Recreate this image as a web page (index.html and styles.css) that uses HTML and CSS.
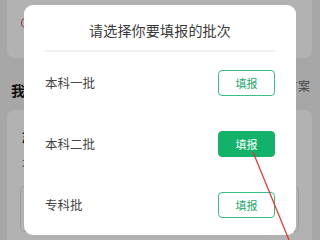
FILE: index.html
```html
<!DOCTYPE html>
<html lang="zh">
<head>
<meta charset="utf-8">
<link rel="stylesheet" href="styles.css">
</head>
<body>
<div class="page">
  <div class="card top-card">
    <span class="red-icon"></span>
  </div>
  <div class="section-head">
    <span class="section-title">我的</span>
    <span class="section-link">方案</span>
  </div>
  <div class="card list-card">
    <div class="list-title">志愿</div>
    <div class="list-sub">本科</div>
    <div class="inner-box"></div>
  </div>
</div>

<div class="mask">
  <div class="dialog">
    <div class="dialog-title">请选择你要填报的批次</div>
    <div class="divider"></div>
    <div class="row">
      <span class="row-label">本科一批</span>
      <button class="btn">填报</button>
    </div>
    <div class="row">
      <span class="row-label">本科二批</span>
      <button class="btn btn-primary">填报</button>
    </div>
    <div class="row">
      <span class="row-label">专科批</span>
      <button class="btn">填报</button>
    </div>
  </div>
</div>

<svg class="annotation" width="320" height="240" viewBox="0 0 320 240">
  <line x1="253" y1="152" x2="289" y2="240" stroke="#e8302a" stroke-width="1.2"/>
</svg>
</body>
</html>
```
FILE: styles.css
```css
html, body {
  margin: 0;
  padding: 0;
  width: 320px;
  height: 240px;
  overflow: hidden;
  background: #f0f0f0;
  font-family: "Noto Sans CJK SC", "Noto Sans", sans-serif;
}

.page {
  padding: 0 8px 0 7px;
  display: flex;
  flex-direction: column;
}

.card {
  background: #ffffff;
  border-radius: 8px;
}

.top-card {
  height: 58px;
  border-radius: 0 0 8px 8px;
  display: flex;
  padding: 17px 0 0 14px;
  box-sizing: border-box;
}

.red-icon {
  width: 12px;
  height: 12px;
  border: 1.5px solid #e04040;
  border-radius: 50%;
  box-sizing: border-box;
}

.section-head {
  display: flex;
  justify-content: space-between;
  align-items: flex-start;
  padding: 20px 2px 0 4px;
  height: 32px;
  box-sizing: border-box;
}

.section-title {
  font-size: 14px;
  font-weight: 700;
  color: #1a1a1a;
  line-height: 20px;
  margin-top: 2px;
}

.section-link {
  font-size: 12px;
  color: #666;
  line-height: 16px;
}

.list-card {
  margin-top: 20px;
  height: 140px;
  padding: 18px 13px 0 15px;
  box-sizing: border-box;
}

.list-title {
  font-size: 13px;
  font-weight: 700;
  color: #222;
  line-height: 18px;
}

.list-sub {
  font-size: 11px;
  color: #666;
  line-height: 14px;
  margin-top: 10px;
}

.inner-box {
  margin-top: 16px;
  margin-left: -2px;
  height: 44px;
  border: 1px solid #e6e6e6;
  border-radius: 4px;
}

.mask {
  position: fixed;
  inset: 0;
  background: rgba(0, 0, 0, 0.3);
  display: flex;
  align-items: center;
  justify-content: center;
}

.dialog {
  width: 272px;
  height: 230px;
  background: #ffffff;
  border-radius: 9px;
  display: flex;
  flex-direction: column;
  padding: 0 21px;
  box-sizing: border-box;
}

.dialog-title {
  height: 45px;
  display: flex;
  align-items: center;
  justify-content: center;
  padding-top: 4px;
  box-sizing: border-box;
  font-size: 14px;
  color: #3a3a3a;
  letter-spacing: 0.2px;
}

.divider {
  height: 2px;
  background: #f0f0f0;
}

.row {
  height: 61px;
  display: flex;
  align-items: center;
  justify-content: space-between;
}

.row-label {
  font-size: 12.5px;
  color: #444;
}

.btn {
  width: 57px;
  height: 26px;
  border: 1px solid #3bbd86;
  border-radius: 4px;
  background: #ffffff;
  color: #21a96c;
  font-family: "Noto Sans CJK SC", "Noto Sans", sans-serif;
  font-size: 11px;
  padding: 0;
  display: flex;
  align-items: center;
  justify-content: center;
}

.btn-primary {
  background: #12b26b;
  border-color: #12b26b;
  color: #ffffff;
}

.annotation {
  position: fixed;
  left: 0;
  top: 0;
  pointer-events: none;
}
```
